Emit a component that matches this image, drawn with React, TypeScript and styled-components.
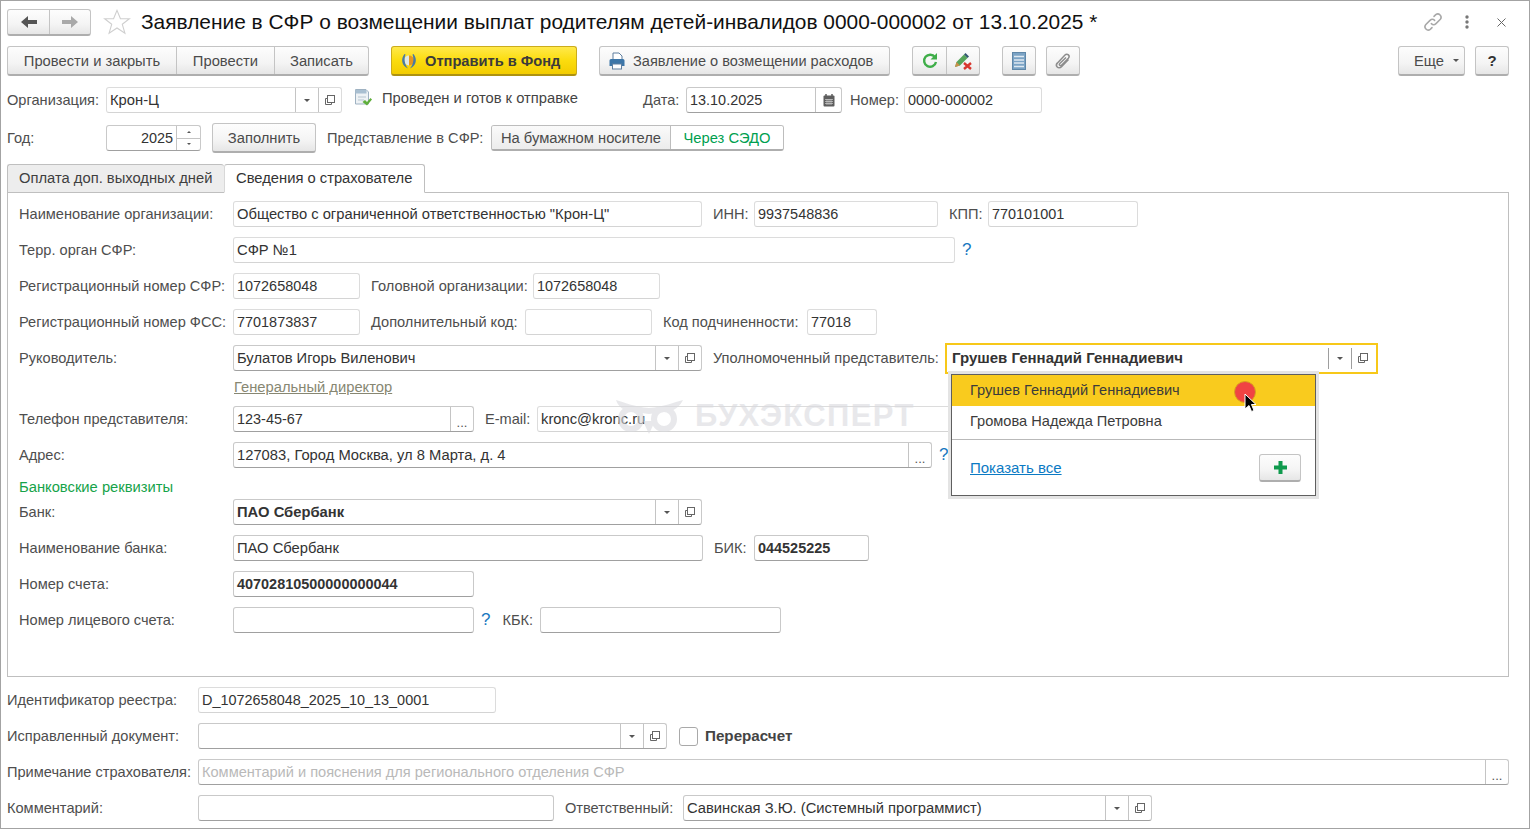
import React from "react";
import styled, { createGlobalStyle, css } from "styled-components";

const Global = createGlobalStyle`
  html, body { margin: 0; padding: 0; background: #fff; overflow: hidden; }
  body { font-family: "Liberation Sans", Arial, sans-serif; font-size: 14.75px; color: #4b4b4b; }
`;

const Page = styled.div`
  position: relative;
  box-sizing: border-box;
  width: 1530px;
  height: 829px;
  border: 1px solid #a3a3a3;
  padding: 7px 20px 0 6px;
  overflow: hidden;
`;

const Row = styled.div<{ $h?: number; $mt?: number }>`
  display: flex;
  align-items: center;
  height: ${(p) => p.$h ?? 26}px;
  margin-top: ${(p) => p.$mt ?? 0}px;
`;

const btnBase = css`
  box-sizing: border-box;
  display: flex;
  align-items: center;
  justify-content: center;
  height: 30px;
  background: linear-gradient(#fdfdfd, #f4f4f4 60%, #e6e6e6);
  border: 1px solid #c4c4c4;
  border-bottom: 2px solid #aeaeae;
  border-radius: 3px;
  color: #4b4b4b;
  white-space: nowrap;
`;

const Btn = styled.div<{ $w: number; $ml?: number }>`
  ${btnBase}
  width: ${(p) => p.$w}px;
  margin-left: ${(p) => p.$ml ?? 0}px;
`;

const LeadBtn = styled(Btn)<{ $pl: number }>`
  justify-content: flex-start;
  padding-left: ${(p) => p.$pl}px;
`;

const HelpBtn = styled(Btn)`
  font-size: 15px;
  font-weight: 700;
  color: #333;
`;

const BtnGroup = styled.div<{ $ml?: number; $h?: number }>`
  display: flex;
  height: ${(p) => p.$h ?? 30}px;
  margin-left: ${(p) => p.$ml ?? 0}px;
  box-sizing: border-box;
  background: linear-gradient(#fdfdfd, #f4f4f4 60%, #e6e6e6);
  border: 1px solid #c4c4c4;
  border-bottom: 2px solid #aeaeae;
  border-radius: 3px;
`;

const GroupCell = styled.div<{ $w: number; $first?: boolean }>`
  box-sizing: border-box;
  width: ${(p) => p.$w}px;
  display: flex;
  align-items: center;
  justify-content: center;
  color: #4b4b4b;
  white-space: nowrap;
  ${(p) => (p.$first ? "" : "border-left: 1px solid #c4c4c4;")}
`;

const YellowBtn = styled.div`
  ${btnBase}
  width: 186px;
  margin-left: 22px;
  justify-content: flex-start;
  padding-left: 8px;
  gap: 7px;
  background: linear-gradient(#ffe94a, #fbdc0e 50%, #f3cc00);
  border: 1px solid #cbac1c;
  border-bottom: 2px solid #ad9211;
  color: #3b3b3b;
  font-size: 14.65px;
  font-weight: 700;
`;

const IconBtnText = styled.span`
  margin-left: 7px;
  font-size: 14.55px;
`;

const StarWrap = styled.div`
  margin-left: 12px;
  display: flex;
`;

const Title = styled.h1`
  margin: 0 0 0 10px;
  font-size: 20.9px;
  font-weight: 400;
  color: #111;
  white-space: nowrap;
`;

const HeaderTools = styled.div`
  margin-left: auto;
  margin-right: 3px;
  display: flex;
  align-items: center;
`;

const ToolSlot = styled.div<{ $ml: number }>`
  display: flex;
  margin-left: ${(p) => p.$ml}px;
`;

const Label = styled.span<{ $w?: number; $ml?: number }>`
  flex: none;
  white-space: nowrap;
  color: #4e4e4e;
  font-size: 14.6px;
  ${(p) => (p.$w ? `width: ${p.$w}px;` : "")}
  margin-left: ${(p) => p.$ml ?? 0}px;
`;

const Field = styled.div<{ $w: number; $ro?: boolean; $ml?: number }>`
  flex: none;
  box-sizing: border-box;
  display: flex;
  align-items: stretch;
  width: ${(p) => p.$w}px;
  height: 26px;
  margin-left: ${(p) => p.$ml ?? 0}px;
  background: #fff;
  border: 1px solid ${(p) => (p.$ro ? "#dcdcdc" : "#c9c9c9")};
  border-bottom-color: ${(p) => (p.$ro ? "#d4d4d4" : "#a0a0a0")};
  border-radius: 3px;
`;

const Value = styled.div<{ $bold?: boolean; $right?: boolean; $hint?: boolean; $num?: boolean }>`
  flex: 1;
  min-width: 0;
  padding: 0 3px;
  line-height: 25px;
  color: ${(p) => (p.$hint ? "#b9b9b9" : "#333")};
  font-weight: ${(p) => (p.$bold ? 700 : 400)};
  font-size: ${(p) => (p.$num ? "14.45px" : p.$hint ? "14.6px" : "inherit")};
  text-align: ${(p) => (p.$right ? "right" : "left")};
  white-space: nowrap;
  overflow: hidden;
`;

const FieldBtn = styled.div<{ $w?: number }>`
  flex: none;
  box-sizing: border-box;
  width: ${(p) => p.$w ?? 23}px;
  display: flex;
  align-items: center;
  justify-content: center;
  border-left: 1px solid #c4c4c4;
  color: #555;
`;

const Dots = styled.span`
  font-size: 13px;
  line-height: 1;
  margin-top: 7px;
  color: #555;
`;

const Spin = styled.div`
  flex: none;
  width: 23px;
  display: flex;
  flex-direction: column;
  border-left: 1px solid #c4c4c4;
`;

const SpinCell = styled.div`
  flex: 1;
  display: flex;
  align-items: center;
  justify-content: center;
  & + & { border-top: 1px solid #c4c4c4; }
`;

const Caret = styled.i<{ $up?: boolean; $s?: number; $ml?: number }>`
  display: block;
  width: 0;
  height: 0;
  margin-left: ${(p) => p.$ml ?? 0}px;
  border-left: ${(p) => p.$s ?? 3}px solid transparent;
  border-right: ${(p) => p.$s ?? 3}px solid transparent;
  ${(p) =>
    p.$up
      ? `border-bottom: ${p.$s ?? 3}px solid #555;`
      : `border-top: ${p.$s ?? 3}px solid #555;`}
`;

const Status = styled.span`
  margin-left: 10px;
  width: 261px;
  flex: none;
  color: #444;
  position: relative;
  top: -2px;
`;

const StatusIcon = styled.div`
  margin-left: 12px;
  width: 18px;
  height: 18px;
  position: relative;
  top: -2px;
`;

const Toggle = styled.div`
  box-sizing: border-box;
  display: flex;
  height: 26px;
  border: 1px solid #bdbdbd;
  border-bottom: 2px solid #aeaeae;
  border-radius: 3px;
  overflow: hidden;
`;

const ToggleOpt = styled.div<{ $on?: boolean; $w: number }>`
  box-sizing: border-box;
  width: ${(p) => p.$w}px;
  display: flex;
  align-items: center;
  justify-content: center;
  white-space: nowrap;
  color: ${(p) => (p.$on ? "#00a04f" : "#4b4b4b")};
  background: ${(p) => (p.$on ? "#fff" : "linear-gradient(#fafafa, #ececec)")};
  ${(p) => (p.$on ? "border-left: 1px solid #bdbdbd;" : "")}
`;

const Tabs = styled.div`
  display: flex;
  height: 29px;
  margin-top: 13px;
  position: relative;
  z-index: 1;
`;

const Tab = styled.div<{ $active?: boolean; $w: number }>`
  box-sizing: border-box;
  width: ${(p) => p.$w}px;
  display: flex;
  align-items: center;
  padding: 0 0 2px 11px;
  border: 1px solid #bfbfbf;
  border-radius: 3px 3px 0 0;
  color: ${(p) => (p.$active ? "#333" : "#3f3f3f")};
  background: ${(p) => (p.$active ? "#fff" : "#ededed")};
  ${(p) => (p.$active ? "border-bottom-color: #fff; border-left-color: #d8d8d8;" : "border-right: none; border-bottom-color: #bfbfbf;")}
`;

const Panel = styled.div`
  box-sizing: border-box;
  width: 1502px;
  height: 485px;
  margin-top: -1px;
  border: 1px solid #bfbfbf;
  padding: 8px 0 0 11px;
`;

const LinkUnder = styled.span`
  color: #878772;
  text-decoration: underline;
  margin-left: 215px;
`;

const Help = styled.span<{ $ml?: number }>`
  color: #1878c0;
  font-size: 17px;
  margin-left: ${(p) => p.$ml ?? 7}px;
`;

const Section = styled.div`
  height: 19px;
  margin-top: 10px;
  color: #16a34a;
  line-height: 19px;
`;

const Focused = styled.div`
  box-sizing: border-box;
  flex: none;
  width: 433px;
  height: 31px;
  display: flex;
  align-items: stretch;
  border: 2px solid #f7c819;
`;

const FocusValue = styled.div`
  flex: 1;
  padding-left: 5px;
  line-height: 25px;
  font-size: 15px;
  font-weight: 700;
  color: #333;
`;

const FocusBtn = styled.div<{ $w: number; $pr?: number }>`
  flex: none;
  box-sizing: border-box;
  width: ${(p) => p.$w}px;
  margin: 3px 0;
  padding-right: ${(p) => p.$pr ?? 0}px;
  display: flex;
  align-items: center;
  justify-content: center;
  border-left: 1px solid #9e9e9e;
`;

const Popup = styled.div`
  position: absolute;
  left: 950px;
  top: 373px;
  box-sizing: border-box;
  width: 365px;
  height: 122px;
  background: #fff;
  border: 1px solid #5f5f5f;
  box-shadow: 0 0 0 3px #e4e4e4;
  font-size: 14.6px;
  z-index: 3;
`;

const PopupItem = styled.div<{ $active?: boolean }>`
  height: 31px;
  line-height: 30px;
  padding-left: 18px;
  color: #3b3b3b;
  background: ${(p) => (p.$active ? "#f9cb1e" : "#fff")};
`;

const PopupFoot = styled.div`
  box-sizing: border-box;
  display: flex;
  align-items: center;
  justify-content: space-between;
  height: 56px;
  margin-top: 2px;
  padding: 0 14px 0 18px;
  border-top: 1px solid #b9b9b9;
`;

const PopupLink = styled.span`
  color: #0b7ac4;
  font-size: 15px;
  text-decoration: underline;
`;

const PlusBtn = styled.div`
  ${btnBase}
  width: 42px;
  height: 28px;
`;

const RedDot = styled.div`
  position: absolute;
  left: 1233px;
  top: 380px;
  width: 22px;
  height: 22px;
  border-radius: 50%;
  background: #f04343;
  border: 1px solid #d9a01f;
  box-sizing: border-box;
  z-index: 4;
`;

const Cursor = styled.svg`
  position: absolute;
  left: 1243px;
  top: 392px;
  z-index: 5;
`;

const Watermark = styled.div`
  position: absolute;
  left: 614px;
  top: 397px;
  display: flex;
  align-items: center;
  gap: 12px;
  z-index: 2;
  pointer-events: none;
  opacity: 0.6;
`;

const WatermarkText = styled.span`
  font-size: 31px;
  font-weight: 700;
  color: #d9dade;
  letter-spacing: 1.4px;
`;

const Checkbox = styled.div`
  flex: none;
  box-sizing: border-box;
  width: 19px;
  height: 19px;
  margin-left: 12px;
  border: 1px solid #a9a9a9;
  border-radius: 3px;
`;

const BoldLabel = styled.span`
  margin: 0 0 2px 7px;
  font-size: 15.2px;
  font-weight: 700;
  color: #444;
`;

const Open = () => (
  <svg width="12" height="12" viewBox="0 0 12 12" fill="none" stroke="#666" strokeWidth="1">
    <rect x="3.5" y="1.5" width="7" height="7" />
    <path d="M3.5 4.5H1.5V10.5H7.5V8.5" />
  </svg>
);

const Drop = () => (
  <>
    <FieldBtn><Caret /></FieldBtn>
    <FieldBtn><Open /></FieldBtn>
  </>
);

const Star = () => (
  <svg width="28" height="26" viewBox="0 0 30 28" fill="#fff" stroke="#cfcfcf" strokeWidth="1.2">
    <path d="M15 1.5l3.7 9h9.6l-7.6 6 2.8 9.5-8.5-5.6-8.5 5.6 2.8-9.5-7.6-6h9.6z" />
  </svg>
);

const Arrow = ({ dir, color }: { dir: "l" | "r"; color: string }) => (
  <svg width="18" height="14" viewBox="0 0 18 14" fill={color}>
    {dir === "l" ? <path d="M1 7l7-6v4h9v4H8v4z" /> : <path d="M17 7l-7-6v4H1v4h9v4z" />}
  </svg>
);

const Emblem = () => (
  <svg width="18" height="18" viewBox="0 0 18 18">
    <path d="M9 3.5a5 5 0 0 1 0 10z" fill="#e8951e" />
    <path d="M9 3.5a5 5 0 0 0 0 10z" fill="#dfe8e6" />
    <path d="M4.5 2C.5 7 1.5 13.5 8 16.5 5 12.5 3.5 8 5.5 2.5z" fill="#4a7aa3" />
    <path d="M13.5 2c4 5 3 11.5-3.5 14.5 3-4 4.5-8.5 2.5-14z" fill="#4a7aa3" />
  </svg>
);

const Printer = () => (
  <svg width="18" height="18" viewBox="0 0 18 18">
    <path d="M5 1h6l3 3v4H5z" fill="#fff" stroke="#5f7f9f" />
    <path d="M1.5 8.5A1.5 1.5 0 0 1 3 7h12a1.5 1.5 0 0 1 1.5 1.5V14h-15z" fill="#3d76a8" />
    <rect x="4.5" y="12" width="9" height="5" fill="#fff" stroke="#5f7f9f" />
  </svg>
);

const Refresh = () => (
  <svg width="18" height="18" viewBox="0 0 18 18" fill="none">
    <path d="M14 5.2A6 6 0 1 0 15 10" stroke="#3fae49" strokeWidth="2.4" />
    <path d="M16 1v6.5H9.500z" fill="#3fae49" />
  </svg>
);

const PenX = () => (
  <svg width="20" height="18" viewBox="0 0 20 18">
    <path d="M2 15l1.5-5L11 2.5 14.5 6 7 13.5z" fill="#57a55a" />
    <path d="M2 15l1.5-5L7 13.5z" fill="#c9904a" />
    <path d="M11 2.5L12.5 1 16 4.5 14.5 6z" fill="#31566f" />
    <path d="M11 11l7 6M18 11l-7 6" stroke="#d8362e" strokeWidth="2.4" />
  </svg>
);

const ListIcon = () => (
  <svg width="14" height="18" viewBox="0 0 14 18">
    <rect x="0.5" y="0.5" width="13" height="17" fill="#7ba3c5" stroke="#5f87a8" />
    <path d="M2 4.5h10M2 8h10M2 11h10M2 14.5h10" stroke="#dfe9f1" strokeWidth="1.5" />
  </svg>
);

const Clip = () => (
  <svg width="18" height="18" viewBox="0 0 18 18" fill="none" stroke="#8d8d8d" strokeWidth="1.5">
    <path d="M14.5 7.5l-7 7.200c-1.500 1.500-3.300 1.300-4.300.3s-1-2.800.3-4.100L11 3c1-1 2.500-1 3.400-.1s.9 2.300 0 3.300L7.500 13.200c-.6.600-1.300.6-1.800.1s-.5-1.200.1-1.800L12 5.500" />
  </svg>
);

const DocCheck = () => (
  <svg width="18" height="18" viewBox="0 0 18 18">
    <path d="M1.5.5H12L14.500 3v12h-13z" fill="#eef2f5" stroke="#9fb2c2" />
    <path d="M1.5 1h11v3.500h-11z" fill="#a9bfd1" />
    <path d="M4 8h8M4 11h6" stroke="#b7c5d0" />
    <path d="M8.5 13l2.500-2 2 2 3.500-4 1.500 1.500-5 6z" fill="#5fae3b" />
  </svg>
);

const Calendar = () => (
  <svg width="12" height="13" viewBox="0 0 12 13">
    <rect x="0.5" y="1.5" width="11" height="11" rx="1" fill="#5e5e5e" />
    <path d="M3 0v3M9 0v3" stroke="#5e5e5e" strokeWidth="1.5" />
    <path d="M2 5.500h8M2 7.500h8M2 9.500h8M4 5v6M6 5v6M8 5v6" stroke="#cfcfcf" strokeWidth="0.7" />
  </svg>
);

const LinkIcon = () => (
  <svg width="22" height="22" viewBox="0 0 20 20" fill="none" stroke="#a8a8a8" strokeWidth="1.4" strokeLinecap="round">
    <path d="M8.5 11.500a3 3 0 0 0 4.200 0l4-4a3 3 0 0 0-4.200-4.200l-1.600 1.600" />
    <path d="M11.5 8.500a3 3 0 0 0-4.200 0l-4 4a3 3 0 0 0 4.200 4.200l1.600-1.600" />
  </svg>
);

const Kebab = () => (
  <svg width="4" height="14" viewBox="0 0 4 14" fill="#777">
    <circle cx="2" cy="2" r="1.7" />
    <circle cx="2" cy="7" r="1.7" />
    <circle cx="2" cy="12" r="1.7" />
  </svg>
);

const Close = () => (
  <svg width="9" height="9" viewBox="0 0 9 9" stroke="#666" strokeWidth="1">
    <path d="M.5.5l8 8M8.500.5l-8 8" />
  </svg>
);

const Plus = () => (
  <svg width="13" height="13" viewBox="0 0 13 13" fill="#0f9a4d">
    <path d="M4.5 0h4v4.500H13v4H8.500V13h-4V8.500H0v-4h4.500z" />
  </svg>
);

const Owl = () => (
  <svg width="68" height="35" viewBox="0 0 68 35" fill="#d9dade">
    <path d="M1 1C9 3 19 8 34 9 49 8 59 3 68 1 65 7 61 10 56 12L34 15 12 12C7 10 3 7 1 1z" />
    <circle cx="16" cy="20" r="10" fill="none" stroke="#d9dade" strokeWidth="6" />
    <circle cx="49" cy="20" r="10" fill="none" stroke="#d9dade" strokeWidth="6" />
    <path d="M28 22h12l-6 13z" />
  </svg>
);

export default function App() {
  return (
    <>
      <Global />
      <Page>
        <Row $h={28}>
          <BtnGroup $h={27}>
            <GroupCell $w={41} $first><Arrow dir="l" color="#555" /></GroupCell>
            <GroupCell $w={41}><Arrow dir="r" color="#a9a9a9" /></GroupCell>
          </BtnGroup>
          <StarWrap><Star /></StarWrap>
          <Title>Заявление в СФР о возмещении выплат родителям детей-инвалидов 0000-000002 от 13.10.2025 *</Title>
          <HeaderTools>
            <LinkIcon />
            <ToolSlot $ml={21}><Kebab /></ToolSlot>
            <ToolSlot $ml={28}><Close /></ToolSlot>
          </HeaderTools>
        </Row>

        <Row $h={30} $mt={10}>
          <BtnGroup>
            <GroupCell $w={168} $first>Провести и закрыть</GroupCell>
            <GroupCell $w={98}>Провести</GroupCell>
            <GroupCell $w={94}>Записать</GroupCell>
          </BtnGroup>
          <YellowBtn><Emblem />Отправить в Фонд</YellowBtn>
          <LeadBtn $w={291} $ml={22} $pl={8}><Printer /><IconBtnText>Заявление о возмещении расходов</IconBtnText></LeadBtn>
          <BtnGroup $ml={22}>
            <GroupCell $w={33} $first><Refresh /></GroupCell>
            <GroupCell $w={33}><PenX /></GroupCell>
          </BtnGroup>
          <Btn $w={34} $ml={22}><ListIcon /></Btn>
          <Btn $w={34} $ml={10}><Clip /></Btn>
          <LeadBtn $w={67} $ml={318} $pl={15}>Еще<Caret $ml={9} /></LeadBtn>
          <HelpBtn $w={34} $ml={10}>?</HelpBtn>
        </Row>

        <Row $mt={11}>
          <Label $w={99}>Организация:</Label>
          <Field $w={236} $ro><Value>Крон-Ц</Value><Drop /></Field>
          <StatusIcon><DocCheck /></StatusIcon>
          <Status>Проведен и готов к отправке</Status>
          <Label $w={43}>Дата:</Label>
          <Field $w={156}><Value $num>13.10.2025</Value><FieldBtn $w={26}><Calendar /></FieldBtn></Field>
          <Label $w={54} $ml={8}>Номер:</Label>
          <Field $w={138} $ro><Value $num>0000-000002</Value></Field>
        </Row>

        <Row $mt={12}>
          <Label $w={99}>Год:</Label>
          <Field $w={95}><Value $right $num>2025</Value><Spin><SpinCell><Caret $up $s={2} /></SpinCell><SpinCell><Caret $s={2} /></SpinCell></Spin></Field>
          <Btn $w={104} $ml={11}>Заполнить</Btn>
          <Label $w={164} $ml={11}>Представление в СФР:</Label>
          <Toggle>
            <ToggleOpt $w={178}>На бумажном носителе</ToggleOpt>
            <ToggleOpt $w={113} $on>Через СЭДО</ToggleOpt>
          </Toggle>
        </Row>

        <Tabs>
          <Tab $w={217}>Оплата доп. выходных дней</Tab>
          <Tab $w={201} $active>Сведения о страхователе</Tab>
        </Tabs>

        <Panel>
          <Row>
            <Label $w={214}>Наименование организации:</Label>
            <Field $w={469} $ro><Value>Общество с ограниченной ответственностью "Крон-Ц"</Value></Field>
            <Label $w={41} $ml={11}>ИНН:</Label>
            <Field $w={184} $ro><Value $num>9937548836</Value></Field>
            <Label $w={39} $ml={11}>КПП:</Label>
            <Field $w={150} $ro><Value $num>770101001</Value></Field>
          </Row>
          <Row $mt={10}>
            <Label $w={214}>Терр. орган СФР:</Label>
            <Field $w={722} $ro><Value>СФР №1</Value></Field>
            <Help>?</Help>
          </Row>
          <Row $mt={10}>
            <Label $w={214}>Регистрационный номер СФР:</Label>
            <Field $w={127} $ro><Value $num>1072658048</Value></Field>
            <Label $w={162} $ml={11}>Головной организации:</Label>
            <Field $w={127} $ro><Value $num>1072658048</Value></Field>
          </Row>
          <Row $mt={10}>
            <Label $w={214}>Регистрационный номер ФСС:</Label>
            <Field $w={127} $ro><Value $num>7701873837</Value></Field>
            <Label $w={154} $ml={11}>Дополнительный код:</Label>
            <Field $w={127} $ro><Value /></Field>
            <Label $w={144} $ml={11}>Код подчиненности:</Label>
            <Field $w={70} $ro><Value $num>77018</Value></Field>
          </Row>
          <Row $mt={10}>
            <Label $w={214}>Руководитель:</Label>
            <Field $w={469}><Value>Булатов Игорь Виленович</Value><Drop /></Field>
            <Label $w={232} $ml={11}>Уполномоченный представитель:</Label>
            <Focused>
              <FocusValue>Грушев Геннадий Геннадиевич</FocusValue>
              <FocusBtn $w={23}><Caret /></FocusBtn>
              <FocusBtn $w={25} $pr={2}><Open /></FocusBtn>
            </Focused>
          </Row>
          <Row $h={20} $mt={6}>
            <LinkUnder>Генеральный директор</LinkUnder>
          </Row>
          <Row $mt={9}>
            <Label $w={214}>Телефон представителя:</Label>
            <Field $w={241}><Value $num>123-45-67</Value><FieldBtn><Dots>...</Dots></FieldBtn></Field>
            <Label $w={52} $ml={11}>E-mail:</Label>
            <Field $w={430} $ro><Value>kronc@kronc.ru</Value></Field>
          </Row>
          <Row $mt={10}>
            <Label $w={214}>Адрес:</Label>
            <Field $w={699}><Value>127083, Город Москва, ул 8 Марта, д. 4</Value><FieldBtn><Dots>...</Dots></FieldBtn></Field>
            <Help>?</Help>
          </Row>
          <Section>Банковские реквизиты</Section>
          <Row $mt={2}>
            <Label $w={214}>Банк:</Label>
            <Field $w={469}><Value $bold>ПАО Сбербанк</Value><Drop /></Field>
          </Row>
          <Row $mt={10}>
            <Label $w={214}>Наименование банка:</Label>
            <Field $w={470}><Value>ПАО Сбербанк</Value></Field>
            <Label $w={40} $ml={11}>БИК:</Label>
            <Field $w={115}><Value $bold $num>044525225</Value></Field>
          </Row>
          <Row $mt={10}>
            <Label $w={214}>Номер счета:</Label>
            <Field $w={241}><Value $bold $num>40702810500000000044</Value></Field>
          </Row>
          <Row $mt={10}>
            <Label $w={214}>Номер лицевого счета:</Label>
            <Field $w={241}><Value /></Field>
            <Help>?</Help>
            <Label $w={38} $ml={12}>КБК:</Label>
            <Field $w={241}><Value /></Field>
          </Row>
        </Panel>

        <Row $mt={10}>
          <Label $w={191}>Идентификатор реестра:</Label>
          <Field $w={298} $ro><Value $num>D_1072658048_2025_10_13_0001</Value></Field>
        </Row>
        <Row $mt={10}>
          <Label $w={191}>Исправленный документ:</Label>
          <Field $w={469}><Value /><Drop /></Field>
          <Checkbox />
          <BoldLabel>Перерасчет</BoldLabel>
        </Row>
        <Row $mt={10}>
          <Label $w={191}>Примечание страхователя:</Label>
          <Field $w={1311}><Value $hint>Комментарий и пояснения для регионального отделения СФР</Value><FieldBtn><Dots>...</Dots></FieldBtn></Field>
        </Row>
        <Row $mt={10}>
          <Label $w={191}>Комментарий:</Label>
          <Field $w={356}><Value /></Field>
          <Label $w={118} $ml={11}>Ответственный:</Label>
          <Field $w={469}><Value>Савинская З.Ю. (Системный программист)</Value><Drop /></Field>
        </Row>

        <Watermark><Owl /><WatermarkText>БУХЭКСПЕРТ</WatermarkText></Watermark>
        <Popup>
          <PopupItem $active>Грушев Геннадий Геннадиевич</PopupItem>
          <PopupItem>Громова Надежда Петровна</PopupItem>
          <PopupFoot>
            <PopupLink>Показать все</PopupLink>
            <PlusBtn><Plus /></PlusBtn>
          </PopupFoot>
        </Popup>
        <RedDot />
        <Cursor width="13" height="20" viewBox="0 0 13 20">
          <path d="M1 1v15l4-3.5 2.5 6 2.5-1-2.5-6H12z" fill="#000" stroke="#fff" strokeWidth="1" />
        </Cursor>
      </Page>
    </>
  );
}
